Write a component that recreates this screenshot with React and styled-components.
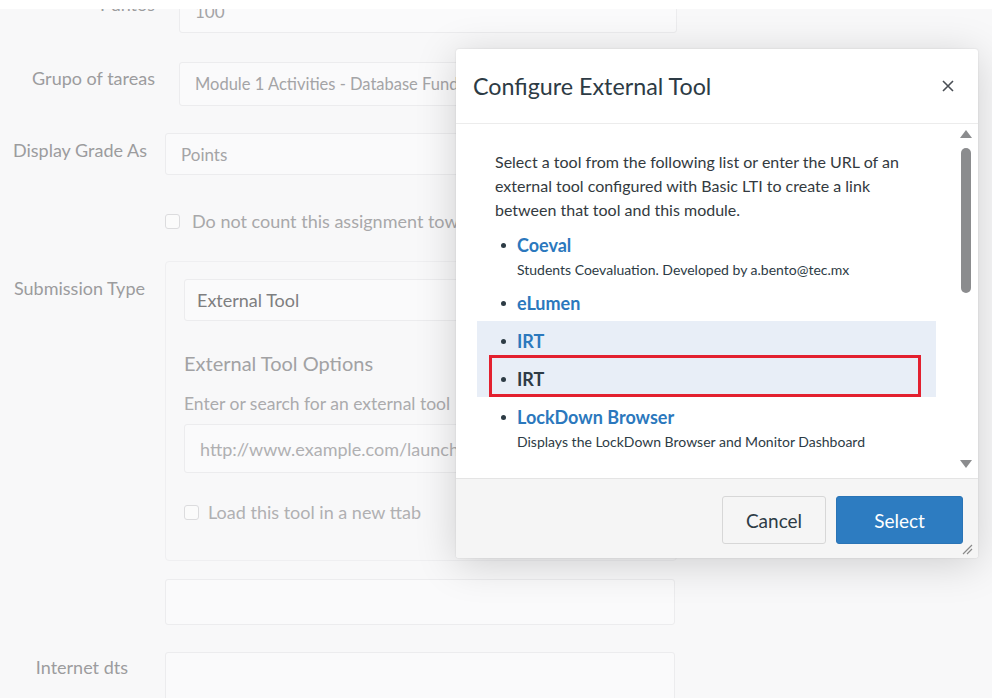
import React from "react";
import styled, { createGlobalStyle } from "styled-components";

const GlobalStyle = createGlobalStyle`
  html, body {
    margin: 0;
    padding: 0;
    background: #ffffff;
    font-family: Lato, "Open Sans", "Liberation Sans", sans-serif;
  }
  * { box-sizing: border-box; }
`;

const Screen = styled.div`
  position: relative;
  width: 992px;
  height: 698px;
  overflow: hidden;
  background: #ffffff;
`;

const Page = styled.div`
  margin-top: 9px;
  height: 689px;
  overflow: hidden;
  background: #f8f8f9;
`;

const Form = styled.div`
  display: flex;
  flex-direction: column;
`;

const Row = styled.div`
  display: grid;
  grid-template-columns: 165px 1fr;
  align-items: start;
  margin-top: ${(p) => p.$top || 0}px;
`;

const Label = styled.div`
  text-align: right;
  font-size: 18px;
  line-height: 22px;
  color: #9c9c9e;
  padding-right: ${(p) => p.$pad || 18}px;
  padding-top: ${(p) => p.$padTop || 0}px;
  white-space: nowrap;
`;

const Input = styled.div`
  margin-left: ${(p) => p.$indent || 0}px;
  width: ${(p) => p.$width || 510}px;
  height: ${(p) => p.$height || 44}px;
  display: flex;
  align-items: center;
  padding-left: ${(p) => p.$padLeft || 15}px;
  border: 1px solid #ececee;
  border-radius: 3px;
  background: #fafafb;
  font-size: ${(p) => p.$size || 17}px;
  color: ${(p) => p.$color || "#a4a4a6"};
  white-space: nowrap;
  overflow: hidden;
`;

const CheckRow = styled.label`
  display: flex;
  align-items: center;
  gap: ${(p) => p.$gap || 12}px;
  margin-top: ${(p) => p.$top || 0}px;
  font-size: 18px;
  line-height: 22px;
  color: ${(p) => p.$color || "#a8a8aa"};
  white-space: nowrap;
  overflow: hidden;
`;

const Box = styled.span`
  flex-shrink: 0;
  width: 15px;
  height: 15px;
  border: 1px solid #dcdcde;
  border-radius: 3px;
  background: #fbfbfb;
`;

const Panel = styled.div`
  width: 512px;
  height: 300px;
  border: 1px solid #efeff1;
  border-radius: 4px;
  padding: 17px 18px;
  display: flex;
  flex-direction: column;
`;

const PanelHeading = styled.div`
  margin-top: 29px;
  font-size: 20px;
  line-height: 26px;
  color: #a2a2a4;
`;

const PanelHint = styled.div`
  margin-top: 17px;
  font-size: 17.5px;
  line-height: 22px;
  color: #ababad;
  white-space: nowrap;
`;

/* ---- modal ---- */

const Modal = styled.div`
  position: absolute;
  left: 456px;
  top: 49px;
  width: 522px;
  height: 509px;
  background: #ffffff;
  border-radius: 3px;
  box-shadow: 0 6px 40px rgba(0, 0, 0, 0.17), 0 0 2px rgba(0, 0, 0, 0.12);
  display: flex;
  flex-direction: column;
  overflow: hidden;
`;

const Header = styled.div`
  height: 75px;
  flex-shrink: 0;
  display: flex;
  align-items: center;
  justify-content: space-between;
  padding: 0 23px 0 17px;
  border-bottom: 1px solid #ececec;
`;

const Title = styled.h2`
  margin: 0;
  font-size: 23.3px;
  font-weight: 400;
  color: #2d3b45;
`;

const Close = styled.button`
  border: none;
  background: none;
  padding: 0;
  width: 14px;
  height: 14px;
  display: grid;
  place-items: center;
  cursor: pointer;
`;

const Body = styled.div`
  height: 354px;
  flex-shrink: 0;
  display: flex;
  overflow: hidden;
`;

const Content = styled.div`
  flex: 1;
  padding-left: 21px;
  padding-right: 20px;
`;

const Description = styled.p`
  margin: 26px 0 3px 18px;
  font-size: 16px;
  line-height: 24px;
  color: #333a40;
`;

const List = styled.ul`
  list-style: none;
  margin: 0;
  padding: 0;
`;

const Item = styled.li`
  position: relative;
  padding: 5px 0 3px 26px;
  background: ${(p) => (p.$hover ? "#e8eef7" : "transparent")};

  &::before {
    content: "";
    position: absolute;
    left: 24px;
    top: 18px;
    width: 5px;
    height: 5px;
    border-radius: 50%;
    background: #2d3b45;
  }

  ${(p) =>
    p.$marked &&
    `
    &::after {
      content: "";
      position: absolute;
      left: 12px;
      right: 15px;
      top: -4px;
      bottom: 0;
      border: 3px solid #e3202f;
    }
  `}
`;

const ItemTitle = styled.a`
  display: block;
  padding-left: 14px;
  font-size: 18px;
  font-weight: 700;
  line-height: 30px;
  color: ${(p) => (p.$plain ? "#2d3b45" : "#2b78bd")};
  text-decoration: none;
`;

const ItemDesc = styled.div`
  padding-left: 14px;
  font-size: 14px;
  line-height: 20px;
  color: #2d3b45;
`;

const Scrollbar = styled.div`
  width: 20px;
  margin-right: 2px;
  display: flex;
  flex-direction: column;
  align-items: center;
  padding: 6px 0 10px;
`;

const Thumb = styled.div`
  margin-top: 10px;
  width: 10px;
  height: 145px;
  border-radius: 5px;
  background: #8b8c8e;
`;

const Spacer = styled.div`
  flex: 1;
`;

const Footer = styled.div`
  flex: 1;
  position: relative;
  display: flex;
  justify-content: flex-end;
  align-items: flex-start;
  gap: 10px;
  padding: 17px 15px 0 0;
  background: #f5f5f5;
  border-top: 1px solid #e4e4e4;
`;

const Button = styled.button`
  height: 48px;
  padding: 0;
  border-radius: 3px;
  font-family: inherit;
  font-size: 19px;
  cursor: pointer;
  border: 1px solid ${(p) => (p.$primary ? "#2a74b6" : "#d7d7d7")};
  background: ${(p) => (p.$primary ? "#2d7cc1" : "#f5f5f5")};
  color: ${(p) => (p.$primary ? "#ffffff" : "#2d3b45")};
  width: ${(p) => (p.$primary ? 127 : 104)}px;
`;

const Grip = styled.svg`
  position: absolute;
  right: 5px;
  bottom: 3px;
`;

const Arrow = ({ down }) => (
  <svg width="12" height="8" viewBox="0 0 12 8">
    <path d={down ? "M0 0 L12 0 L6 8 Z" : "M0 8 L12 8 L6 0 Z"} fill="#8b8c8e" />
  </svg>
);

export default function App() {
  return (
    <Screen>
      <GlobalStyle />
      <Page>
        <Form>
          <Row $top={-20}>
            <Label $pad={10} $padTop={4}>Puntos</Label>
            <Input $indent={14} $width={498}>100</Input>
          </Row>
          <Row $top={29}>
            <Label $pad={10} $padTop={5}>Grupo of tareas</Label>
            <Input $indent={14} $width={498} $size={16.5}>
              Module 1 Activities - Database Fundamentals
            </Input>
          </Row>
          <Row $top={27}>
            <Label $pad={18} $padTop={6}>Display Grade As</Label>
            <Input $height={42}>Points</Input>
          </Row>
          <Row $top={35}>
            <div />
            <CheckRow $top={0}>
              <Box />
              Do not count this assignment towards the final grade
            </CheckRow>
          </Row>
          <Row $top={29}>
            <Label $pad={20} $padTop={16}>Submission Type</Label>
            <Panel>
              <Input $width={480} $height={42} $padLeft={12} $size={18} $color="#7e7e80">
                External Tool
              </Input>
              <PanelHeading>External Tool Options</PanelHeading>
              <PanelHint>Enter or search for an external tool</PanelHint>
              <Input $width={480} $height={49} $size={18} $color="#b0b0b2" style={{ marginTop: 9 }}>
                http://www.example.com/launch
              </Input>
              <CheckRow $color="#b0b0b2" $top={28} $gap={9}>
                <Box />
                Load this tool in a new ttab
              </CheckRow>
            </Panel>
          </Row>
          <Row $top={18}>
            <div />
            <Input $height={46} />
          </Row>
          <Row $top={27}>
            <Label $pad={37} $padTop={4}>Internet dts</Label>
            <Input $height={60} />
          </Row>
        </Form>
      </Page>

      <Modal>
        <Header>
          <Title>Configure External Tool</Title>
          <Close aria-label="Close">
            <svg width="12" height="12" viewBox="0 0 12 12">
              <path d="M1 1 L11 11 M11 1 L1 11" stroke="#4a4f55" strokeWidth="1.6" />
            </svg>
          </Close>
        </Header>
        <Body>
          <Content>
            <Description>
              Select a tool from the following list or enter the URL of an
              <br />
              external tool configured with Basic LTI to create a link
              <br />
              between that tool and this module.
            </Description>
            <List>
              <Item>
                <ItemTitle>Coeval</ItemTitle>
                <ItemDesc>Students Coevaluation. Developed by a.bento@tec.mx</ItemDesc>
              </Item>
              <Item>
                <ItemTitle>eLumen</ItemTitle>
              </Item>
              <Item $hover>
                <ItemTitle>IRT</ItemTitle>
              </Item>
              <Item $hover $marked>
                <ItemTitle $plain>IRT</ItemTitle>
              </Item>
              <Item>
                <ItemTitle>LockDown Browser</ItemTitle>
                <ItemDesc>Displays the LockDown Browser and Monitor Dashboard</ItemDesc>
              </Item>
            </List>
          </Content>
          <Scrollbar>
            <Arrow />
            <Thumb />
            <Spacer />
            <Arrow down />
          </Scrollbar>
        </Body>
        <Footer>
          <Button>Cancel</Button>
          <Button $primary>Select</Button>
          <Grip width="11" height="11" viewBox="0 0 11 11">
            <path d="M1 10 L10 1 M5 10 L10 5" stroke="#8a8a8a" strokeWidth="1.2" />
          </Grip>
        </Footer>
      </Modal>
    </Screen>
  );
}
